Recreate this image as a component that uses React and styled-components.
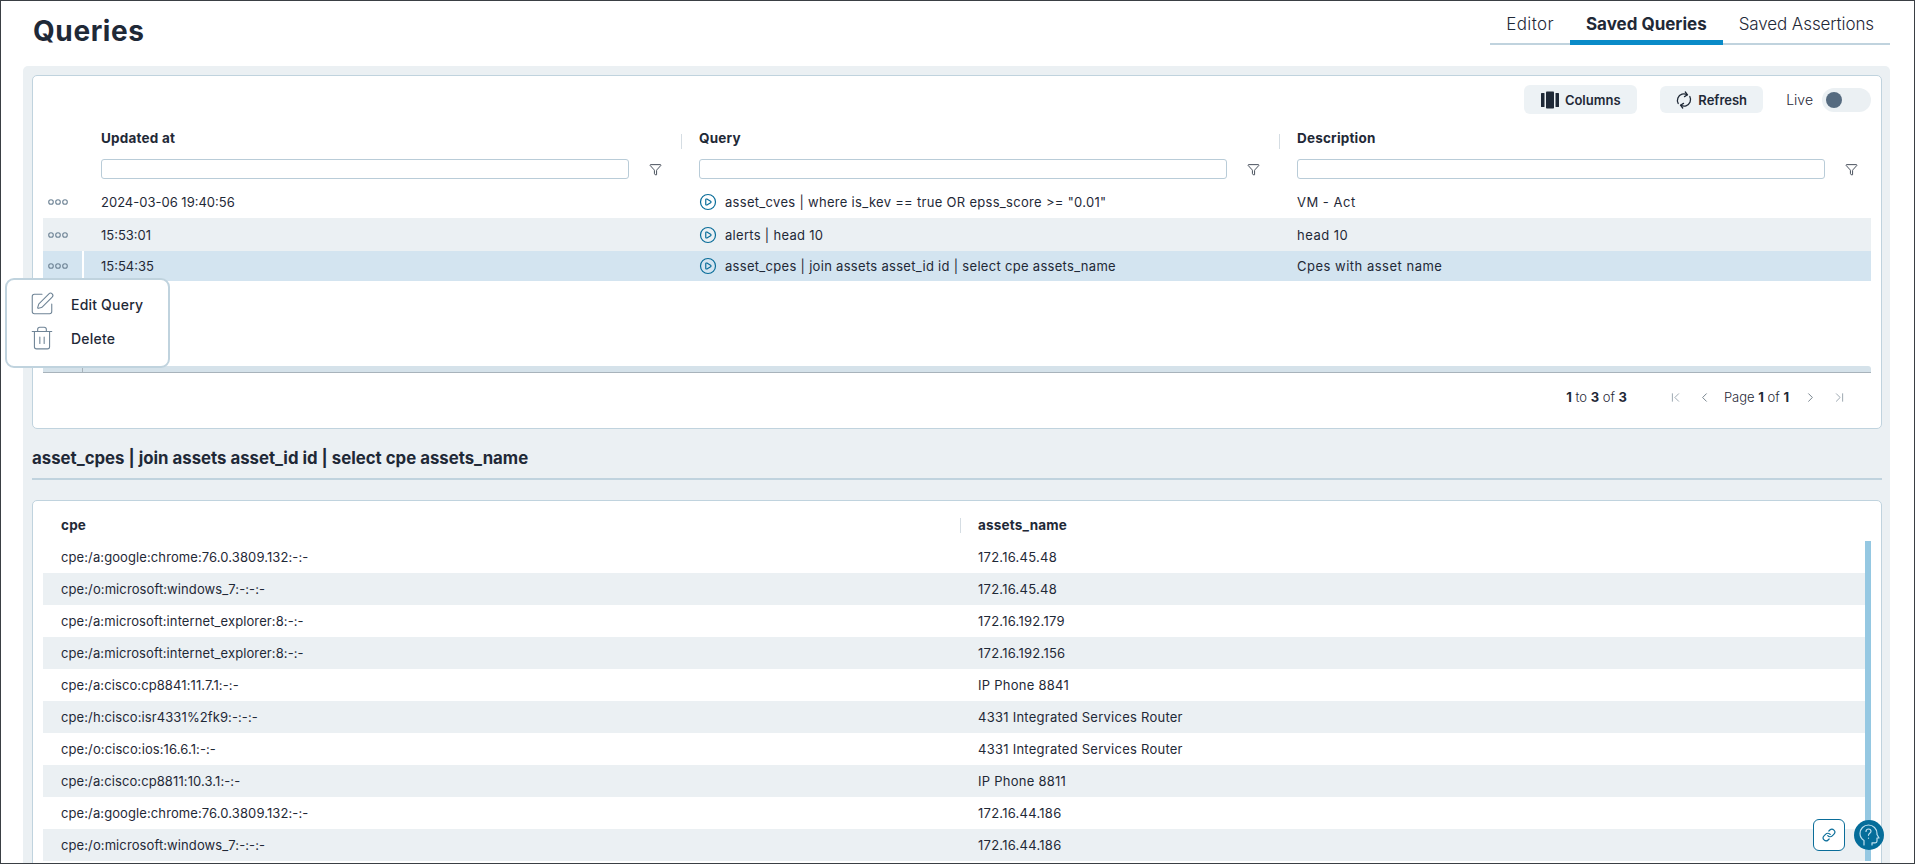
import styled, { createGlobalStyle } from "styled-components";
import {
  ChevronFirst,
  ChevronLast,
  ChevronLeft,
  ChevronRight,
  CirclePlay,
  Funnel,
  Link,
  SquarePen,
  Trash2,
} from "lucide-react";

const savedQueries = [
  { updated: "2024-03-06 19:40:56", query: 'asset_cves | where is_kev == true OR epss_score >= "0.01"', description: "VM - Act" },
  { updated: "15:53:01", query: "alerts | head 10", description: "head 10" },
  { updated: "15:54:35", query: "asset_cpes | join assets asset_id id | select cpe assets_name", description: "Cpes with asset name" },
];

const results = [
  ["cpe:/a:google:chrome:76.0.3809.132:-:-", "172.16.45.48"],
  ["cpe:/o:microsoft:windows_7:-:-:-", "172.16.45.48"],
  ["cpe:/a:microsoft:internet_explorer:8:-:-", "172.16.192.179"],
  ["cpe:/a:microsoft:internet_explorer:8:-:-", "172.16.192.156"],
  ["cpe:/a:cisco:cp8841:11.7.1:-:-", "IP Phone 8841"],
  ["cpe:/h:cisco:isr4331%2fk9:-:-:-", "4331 Integrated Services Router"],
  ["cpe:/o:cisco:ios:16.6.1:-:-", "4331 Integrated Services Router"],
  ["cpe:/a:cisco:cp8811:10.3.1:-:-", "IP Phone 8811"],
  ["cpe:/a:google:chrome:76.0.3809.132:-:-", "172.16.44.186"],
  ["cpe:/o:microsoft:windows_7:-:-:-", "172.16.44.186"],
];

const GlobalStyle = createGlobalStyle`
  html, body {
    margin: 0;
    padding: 0;
    background: #fff;
  }
  body {
    font-family: "Inter", "Liberation Sans", sans-serif;
    color: #1f2937;
  }
`;

const Frame = styled.div`
  position: relative;
  box-sizing: border-box;
  width: 1915px;
  height: 864px;
  border: 1px solid #3a3f44;
  overflow: hidden;
  background: #fff;
`;

const Header = styled.header`
  display: flex;
  justify-content: space-between;
  height: 65px;
  padding: 0 24px 0 32px;
`;

const Title = styled.h1`
  margin: 0;
  padding-top: 12px;
  font-size: 28px;
  line-height: 36px;
  font-weight: 700;
  letter-spacing: 0.6px;
  color: #1f2937;
`;

const Tabs = styled.nav`
  display: flex;
  align-self: flex-start;
  height: 44px;
  box-sizing: border-box;
  border-bottom: 2px solid #c0d3de;
`;

const Tab = styled.div`
  box-sizing: border-box;
  height: 44px;
  padding: 13px 16px 0;
  font-size: 17px;
  line-height: 20px;
  white-space: nowrap;
  letter-spacing: ${(p) => p.$spacing || 0}px;
  font-weight: ${(p) => (p.$active ? 700 : 300)};
  border-bottom: ${(p) => (p.$active ? "5px solid #0a8bc8" : "none")};
`;

const Panel = styled.main`
  margin: 0 24px 0 22px;
  padding: 9px 8px 0 9px;
  height: 800px;
  box-sizing: border-box;
  background: #ebf0f3;
  border-radius: 5px 5px 0 0;
`;

const Card = styled.section`
  box-sizing: border-box;
  height: ${(p) => p.$height};
  padding: 0 10px;
  background: #fff;
  border: 1px solid #c0d3de;
  border-radius: 5px;
`;

const Toolbar = styled.div`
  display: flex;
  justify-content: flex-end;
  align-items: center;
  box-sizing: border-box;
  height: 50px;
  padding-bottom: 3px;
`;

const ToolButton = styled.button`
  display: flex;
  align-items: center;
  justify-content: center;
  gap: 6px;
  width: ${(p) => p.$width}px;
  height: ${(p) => p.$tall}px;
  margin-right: ${(p) => p.$gap}px;
  padding: 0;
  border: none;
  border-radius: 6px;
  background: #edf2f5;
  font-family: inherit;
  font-size: 13px;
  font-weight: 600;
  color: #1f2937;
  svg {
    flex: none;
  }
`;

const LiveLabel = styled.span`
  margin-right: 9px;
  font-size: 14px;
  font-weight: 300;
`;

const Toggle = styled.div`
  display: flex;
  align-items: center;
  box-sizing: border-box;
  width: 49px;
  height: 24px;
  padding-left: 4px;
  border-radius: 12px;
  background: #ebf0f3;
`;

const Knob = styled.span`
  width: 16px;
  height: 16px;
  border-radius: 50%;
  background: #566b80;
`;

const GridRow = styled.div`
  display: grid;
  grid-template-columns: 40px 598px 598px 1fr;
`;

const HeadRow = styled(GridRow)`
  height: 26px;
  align-items: start;
`;

const HeadCell = styled.div`
  position: relative;
  padding: 2px 0 0 18px;
  font-size: 13.5px;
  letter-spacing: 0.2px;
  line-height: 20px;
  font-weight: 700;
  &::before {
    content: "";
    display: ${(p) => (p.$divider ? "block" : "none")};
    position: absolute;
    left: 0;
    top: 8px;
    height: 15px;
    border-left: 1px solid #d5dde3;
  }
`;

const FilterRow = styled(GridRow)`
  height: 34px;
  padding-top: 7px;
  box-sizing: border-box;
`;

const FilterCell = styled.div`
  display: flex;
  align-items: flex-start;
  padding-left: 18px;
  svg {
    margin: 4px 0 0 20px;
    color: #1f2937;
  }
`;

const FilterInput = styled.input`
  box-sizing: border-box;
  width: 528px;
  height: 20px;
  padding: 0 6px;
  border: 1px solid #b9ccd8;
  border-radius: 3px;
  background: #fff;
`;

const RowList = styled.div`
  height: 180px;
`;

const QueryRow = styled(GridRow)`
  height: ${(p) => p.$height}px;
  align-items: center;
  font-size: 13px;
  font-weight: 400;
  background: ${(p) => p.$bg};
`;

const MenuCell = styled.div`
  display: flex;
  align-items: center;
  align-self: stretch;
  padding-left: 4px;
  border-right: ${(p) => (p.$split ? "2px solid #fff" : "none")};
  margin-right: ${(p) => (p.$split ? "-1px" : "0")};
`;

const TextCell = styled.div`
  display: flex;
  align-items: center;
  gap: 8px;
  padding-left: 18px;
  white-space: nowrap;
  letter-spacing: ${(p) => p.$spacing || 0}px;
`;

const ScrollStrip = styled.div`
  position: relative;
  height: 7px;
  box-sizing: border-box;
  background: #d5e2ea;
  border-bottom: 1px solid #a8b3bb;
  border-radius: 0 3px 0 0;
  &::before {
    content: "";
    position: absolute;
    left: 39px;
    top: 1px;
    bottom: 0;
    border-left: 1px solid #a8b3bb;
  }
`;

const Pager = styled.footer`
  display: flex;
  justify-content: flex-end;
  align-items: center;
  height: 48px;
  padding-right: 17px;
  font-size: 13px;
  font-weight: 300;
  b {
    font-weight: 700;
  }
`;

const PageCount = styled.span`
  margin-right: 34px;
`;

const PageIcon = styled.span`
  display: flex;
  margin: 0 7px;
  color: ${(p) => (p.$edge ? "#8f9ba6" : "#66747f")};
`;

const PageLabel = styled.span`
  margin: 0 7px 0 5px;
`;

const SectionTitle = styled.h2`
  margin: 0 0 20px;
  box-sizing: border-box;
  height: 51px;
  padding-top: 18px;
  border-bottom: 2px solid #c0d3de;
  font-size: 16.8px;
  line-height: 22px;
  font-weight: 700;
`;

const ResultHead = styled.div`
  display: grid;
  grid-template-columns: 917px 1fr;
  height: 40px;
`;

const ResultHeadCell = styled.div`
  position: relative;
  padding: 14px 0 0 18px;
  font-size: 13.5px;
  letter-spacing: 0.2px;
  line-height: 20px;
  font-weight: 700;
  &::before {
    content: "";
    display: ${(p) => (p.$divider ? "block" : "none")};
    position: absolute;
    left: 0;
    top: 17px;
    height: 15px;
    border-left: 1px solid #d5dde3;
  }
`;

const ResultBody = styled.div`
  display: flex;
`;

const ResultRows = styled.div`
  flex: 1;
`;

const ResultRow = styled.div`
  display: grid;
  grid-template-columns: 917px 1fr;
  align-items: center;
  height: 32px;
  font-size: 13px;
  background: ${(p) => (p.$alt ? "#ebf0f3" : "#fff")};
`;

const ResultCell = styled.div`
  padding-left: 18px;
  white-space: nowrap;
  letter-spacing: ${(p) => p.$spacing}px;
`;

const ScrollThumb = styled.div`
  width: 6px;
  background: #95c8e2;
`;

const PopMenu = styled.div`
  position: absolute;
  left: 4px;
  top: 277px;
  box-sizing: border-box;
  width: 165px;
  height: 90px;
  padding: 7px 0 0 22px;
  background: #fff;
  border: 2px solid #c0d3de;
  border-radius: 9px;
`;

const PopItem = styled.div`
  display: flex;
  align-items: center;
  gap: 16px;
  height: 34px;
  font-size: 14px;
  letter-spacing: 0.2px;
  font-weight: 500;
  svg {
    flex: none;
    color: #6f8496;
  }
`;

const LinkButton = styled.div`
  position: absolute;
  left: 1812px;
  top: 818px;
  display: flex;
  align-items: center;
  justify-content: center;
  box-sizing: border-box;
  width: 32px;
  height: 32px;
  background: #fff;
  border: 1px solid #0a6d99;
  border-radius: 6px;
  color: #0a6d99;
`;

const HelpButton = styled.div`
  position: absolute;
  left: 1853px;
  top: 819px;
  display: flex;
  align-items: center;
  justify-content: center;
  width: 30px;
  height: 30px;
  border-radius: 50%;
  background: #056d9a;
`;

function Dots() {
  return (
    <svg width="22" height="8" viewBox="0 0 22 8" fill="none" stroke="#6f8496" strokeWidth="1.1">
      <circle cx="4" cy="4" r="2.3" />
      <circle cx="11" cy="4" r="2.3" />
      <circle cx="18" cy="4" r="2.3" />
    </svg>
  );
}

function ColumnsIcon() {
  return (
    <svg width="18" height="18" viewBox="0 0 18 18" fill="#1f2937">
      <rect x="0" y="2" width="3.5" height="14" rx="0.6" />
      <rect x="5" y="0.5" width="8" height="17" rx="0.8" />
      <rect x="14.5" y="2" width="3.5" height="14" rx="0.6" />
    </svg>
  );
}

function RefreshIcon() {
  return (
    <svg width="16" height="18" viewBox="0 0 16 18" fill="none" stroke="#1f2937" strokeWidth="1.3" strokeLinecap="round" strokeLinejoin="round">
      <path d="M2.2 12.5A6.5 6.5 0 0 1 6 3.2c1.7-.5 3.5-.3 5 .6" />
      <path d="M13.8 5.5A6.5 6.5 0 0 1 10 14.8c-1.7.5-3.5.3-5-.6" />
      <path d="M9.3 1l2.2 2.8-3 1.8" />
      <path d="M6.7 17l-2.2-2.8 3-1.8" />
    </svg>
  );
}

function HelpHead() {
  return (
    <svg width="22" height="24" viewBox="0 0 22 24" fill="none" stroke="#bfe0ef" strokeWidth="1.2" strokeLinecap="round" strokeLinejoin="round">
      <path d="M6 22v-4.5C3.5 15.8 2 13.3 2 10.5 2 5.8 5.8 2 10.5 2S19 5.8 19 10.5v1l2 3.5h-2v3c0 1-.8 1.8-1.8 1.8H14V22" />
      <path d="M8 8.5c0-1.5 1.1-2.5 2.5-2.5S13 7 13 8.3c0 1.9-2.5 2-2.5 4" />
      <path d="M10.5 15v.2" />
    </svg>
  );
}

export default function App() {
  return (
    <Frame>
      <GlobalStyle />
      <Header>
        <Title>Queries</Title>
        <Tabs>
          <Tab $spacing={0.4}>Editor</Tab>
          <Tab $active>Saved Queries</Tab>
          <Tab $spacing={-0.1}>Saved Assertions</Tab>
        </Tabs>
      </Header>
      <Panel>
        <Card $height="354px">
          <Toolbar>
            <ToolButton $width={113} $tall={29} $gap={23}>
              <ColumnsIcon />
              Columns
            </ToolButton>
            <ToolButton $width={103} $tall={27} $gap={23}>
              <RefreshIcon />
              Refresh
            </ToolButton>
            <LiveLabel>Live</LiveLabel>
            <Toggle>
              <Knob />
            </Toggle>
          </Toolbar>
          <HeadRow>
            <div />
            <HeadCell>Updated at</HeadCell>
            <HeadCell $divider>Query</HeadCell>
            <HeadCell $divider>Description</HeadCell>
          </HeadRow>
          <FilterRow>
            <div />
            {[0, 1, 2].map((i) => (
              <FilterCell key={i}>
                <FilterInput />
                <Funnel size={13} strokeWidth={1.5} />
              </FilterCell>
            ))}
          </FilterRow>
          <RowList>
            {savedQueries.map((row, i) => (
              <QueryRow
                key={row.updated}
                $height={[32, 33, 30][i]}
                $bg={["#fff", "#ebf0f3", "#d3e4f0"][i]}
              >
                <MenuCell $split={i === 2}>
                  <Dots />
                </MenuCell>
                <TextCell>{row.updated}</TextCell>
                <TextCell $spacing={0.3}>
                  <CirclePlay size={18} strokeWidth={1.6} color="#0a6d99" />
                  {row.query}
                </TextCell>
                <TextCell $spacing={0.5}>{row.description}</TextCell>
              </QueryRow>
            ))}
          </RowList>
          <ScrollStrip />
          <Pager>
            <PageCount>
              <b>1</b> to <b>3</b> of <b>3</b>
            </PageCount>
            <PageIcon $edge>
              <ChevronFirst size={15} strokeWidth={1.4} />
            </PageIcon>
            <PageIcon>
              <ChevronLeft size={15} strokeWidth={1.4} />
            </PageIcon>
            <PageLabel>
              Page <b>1</b> of <b>1</b>
            </PageLabel>
            <PageIcon>
              <ChevronRight size={15} strokeWidth={1.4} />
            </PageIcon>
            <PageIcon $edge>
              <ChevronLast size={15} strokeWidth={1.4} />
            </PageIcon>
          </Pager>
        </Card>
        <SectionTitle>asset_cpes | join assets asset_id id | select cpe assets_name</SectionTitle>
        <Card $height="400px">
          <ResultHead>
            <ResultHeadCell>cpe</ResultHeadCell>
            <ResultHeadCell $divider>assets_name</ResultHeadCell>
          </ResultHead>
          <ResultBody>
            <ResultRows>
              {results.map(([cpe, name], i) => (
                <ResultRow key={i} $alt={i % 2 === 1}>
                  <ResultCell $spacing={0.1}>{cpe}</ResultCell>
                  <ResultCell $spacing={0.25}>{name}</ResultCell>
                </ResultRow>
              ))}
            </ResultRows>
            <ScrollThumb />
          </ResultBody>
        </Card>
      </Panel>
      <PopMenu>
        <PopItem>
          <SquarePen size={26} strokeWidth={1} />
          Edit Query
        </PopItem>
        <PopItem>
          <Trash2 size={26} strokeWidth={1} />
          Delete
        </PopItem>
      </PopMenu>
      <LinkButton>
        <Link size={14} strokeWidth={2} />
      </LinkButton>
      <HelpButton>
        <HelpHead />
      </HelpButton>
    </Frame>
  );
}
